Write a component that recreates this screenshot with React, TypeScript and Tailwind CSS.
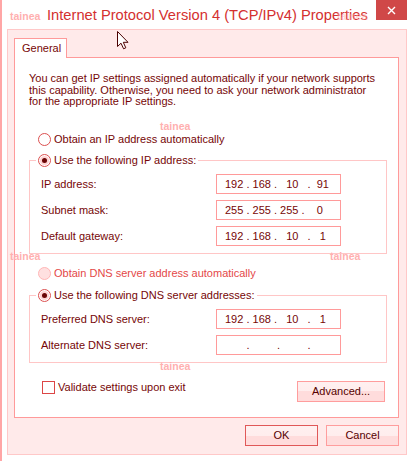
import clsx from "clsx"

const TEXT = "text-[#760606]"

function Radio({ checked = false, disabled = false }: { checked?: boolean; disabled?: boolean }) {
  return (
    <span
      className={clsx(
        "flex h-[13px] w-[13px] shrink-0 items-center justify-center rounded-full border",
        disabled ? "border-[#ffb6b6] bg-[#ffe0e0]" : "border-[#dc5050] bg-white"
      )}
    >
      {checked && <span className="h-[5px] w-[5px] rounded-full bg-[#6a0505] ring-2 ring-[#ffd2d2]" />}
    </span>
  )
}

function IpBox({ value }: { value: string }) {
  return (
    <div className={`h-[20px] w-[125px] whitespace-pre border border-[#ff9a9a] bg-white pl-[8px] text-[11px] leading-[18px] ${TEXT}`}>
      {value}
    </div>
  )
}

function Row({ label, value }: { label: string; value: string }) {
  return (
    <div className="flex h-[20px] items-center">
      <span className={`w-[180px] pl-[5px] text-[11px] leading-[13px] ${TEXT}`}>{label}</span>
      <IpBox value={value} />
    </div>
  )
}

function Group({ legend, children }: { legend: string; children: React.ReactNode }) {
  return (
    <fieldset className="w-[358px] border border-[#ffc6c6] px-[6px] pb-[7px]">
      <legend className="px-[2px]">
        <span className="flex h-[13px] items-center gap-[3px]">
          <Radio checked />
          <span className={`text-[11px] leading-[13px] ${TEXT}`}>{legend}</span>
        </span>
      </legend>
      <div className="flex flex-col gap-[6px] pt-[7px]">{children}</div>
    </fieldset>
  )
}

function WinButton({ label, primary = false, className }: { label: string; primary?: boolean; className?: string }) {
  return (
    <button
      className={clsx(
        "flex h-[21px] items-center justify-center border bg-[linear-gradient(#fff0f0_0%,#ffeded_50%,#ffdcdc_50%,#ffdcdc_100%)] text-[11px] leading-[13px] text-[#560000]",
        primary ? "border-[#e05858]" : "border-[#ff9d9d]",
        className
      )}
    >
      {label}
    </button>
  )
}

function Mark({ className }: { className: string }) {
  return (
    <span className={`absolute text-[10.5px] font-bold leading-[12px] text-[#ffb0b0] ${className}`}>tainea</span>
  )
}

export default function App() {
  const alt = "       .         .         ."

  return (
    <div className="relative h-[461px] w-[413px] overflow-hidden border-l-2 border-[#ffa6a6] bg-white font-['Liberation_Sans',Arial,sans-serif]">
      {/* title bar */}
      <div className="flex h-[29px]">
        <div className="whitespace-nowrap pl-[45px] pt-[7px] text-[14.7px] leading-[17px] text-[#d4302f]">
          Internet Protocol Version 4 (TCP/IPv4) Properties
        </div>
        <button className="ml-auto mr-[6px] flex h-[20px] w-[31px] items-center justify-center bg-[#d04848]">
          <svg width="9" height="9" viewBox="0 0 9 9">
            <path d="M1 1 L8 8 M8 1 L1 8" stroke="white" strokeWidth="1.4" />
          </svg>
        </button>
      </div>

      {/* client area */}
      <div className="ml-[5px] flex h-[426px] w-[400px] flex-col border border-[#ffc8c8] bg-[#ffeaea] pl-[6px] pt-[8px]">
        <div className={`relative z-10 -mb-[1px] h-[20px] w-[53px] border border-b-0 border-[#ff9a9a] bg-white pl-[7px] pt-[3px] text-[11px] leading-[13px] ${TEXT}`}>
          General
        </div>
        <div className="h-[361px] w-[385px] border border-[#ff9a9a] bg-white">
          <div className="flex flex-col pl-[14px] pr-[11px] pt-[15px]">
            <p className={`whitespace-nowrap text-[11px] leading-[11.5px] ${TEXT}`}>
              You can get IP settings assigned automatically if your network supports
              <br />
              this capability. Otherwise, you need to ask your network administrator
              <br />
              for the appropriate IP settings.
            </p>

            <div className="mt-[25.5px] flex h-[13px] items-center gap-[3px] pl-[9px]">
              <Radio />
              <span className={`text-[11px] leading-[13px] ${TEXT}`}>Obtain an IP address automatically</span>
            </div>

            <div className="mt-[8px]">
              <Group legend="Use the following IP address:">
                <Row label="IP address:" value="192 . 168 .   10   .  91" />
                <Row label="Subnet mask:" value="255 . 255 . 255 .    0" />
                <Row label="Default gateway:" value="192 . 168 .   10   .   1" />
              </Group>
            </div>

            <div className="mt-[13px] flex h-[13px] items-center gap-[3px] pl-[9px]">
              <Radio disabled />
              <span className="text-[11px] leading-[13px] text-[#e44848]">Obtain DNS server address automatically</span>
            </div>

            <div className="mt-[9px]">
              <Group legend="Use the following DNS server addresses:">
                <Row label="Preferred DNS server:" value="192 . 168 .   10   .   1" />
                <Row label="Alternate DNS server:" value={alt} />
              </Group>
            </div>

            <div className="mt-[18px] flex items-start justify-between">
              <label className="flex h-[13px] items-center gap-[3px] pl-[13px]">
                <span className="h-[13px] w-[13px] border border-[#dc4646] bg-white" />
                <span className={`text-[11px] leading-[13px] ${TEXT}`}>Validate settings upon exit</span>
              </label>
              <WinButton label="Advanced..." className="mr-[2px] w-[88px]" />
            </div>
          </div>
        </div>

        <div className="mt-[7px] flex w-[385px] justify-end gap-[8px]">
          <WinButton label="OK" primary className="w-[73px]" />
          <WinButton label="Cancel" className="w-[73px]" />
        </div>
      </div>

      {/* watermarks */}
      <Mark className="left-[8px] top-[10px]" />
      <Mark className="left-[335px] top-[10px] opacity-50" />
      <Mark className="left-[158px] top-[120px]" />
      <Mark className="left-[8px] top-[250px]" />
      <Mark className="left-[328px] top-[250px]" />
      <Mark className="left-[158px] top-[360px]" />

      {/* mouse pointer */}
      <svg className="absolute left-[115px] top-[31px]" width="13" height="19" viewBox="0 0 13 19">
        <path
          d="M0.5 0.5 L0.5 15.5 L4 12.2 L6.6 17.8 L8.8 16.8 L6.3 11.3 L11 11.3 Z"
          fill="white"
          stroke="#4a0000"
          strokeWidth="1"
          strokeLinejoin="miter"
        />
      </svg>
    </div>
  )
}
